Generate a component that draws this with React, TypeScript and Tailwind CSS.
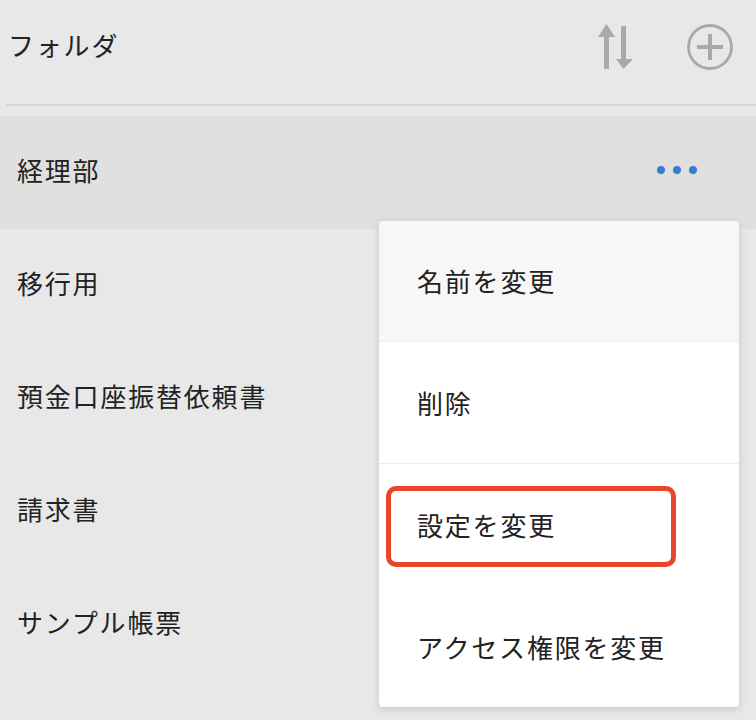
import React from 'react';

const folders = ['経理部', '移行用', '預金口座振替依頼書', '請求書', 'サンプル帳票'];

const menuItems = ['名前を変更', '削除', '設定を変更', 'アクセス権限を変更'];

const SortIcon = () => (
  <svg width="36" height="48" viewBox="0 0 36 48" className="block">
    {/* up arrow */}
    <polygon points="10.5,1 19,14 2,14" fill="#a9a9a9" />
    <rect x="8" y="13" width="5" height="33" fill="#a9a9a9" />
    {/* down arrow */}
    <rect x="25" y="3" width="5" height="34" fill="#a9a9a9" />
    <polygon points="20,36 37,36 27.5,46" fill="#a9a9a9" />
  </svg>
);

const PlusCircleIcon = () => (
  <svg width="48" height="48" viewBox="0 0 48 48" className="block">
    <circle cx="24" cy="24" r="21.5" fill="none" stroke="#a9a9a9" strokeWidth="2.8" />
    <rect x="11" y="22" width="26" height="4" fill="#a9a9a9" />
    <rect x="22" y="11" width="4" height="26" fill="#a9a9a9" />
  </svg>
);

export default function App() {
  return (
    <div
      className="relative w-[756px] h-[720px] overflow-hidden bg-[#e8e8e8] text-[#222222]"
      style={{ fontFamily: '"Noto Sans CJK JP", "Noto Sans", sans-serif' }}
    >
      {/* header */}
      <div className="flex items-center justify-between h-[104px] pl-[8px] pr-[22px]">
        <h1 className="text-[26px] tracking-[1.8px] leading-none -mt-[14px]">フォルダ</h1>
        <div className="flex items-center gap-[54px] -mt-[10px]">
          <SortIcon />
          <PlusCircleIcon />
        </div>
      </div>
      <div className="ml-[6px] h-[2px] bg-[#d6d6d6]" />

      {/* folder list */}
      <div className="mt-[10px]">
        {folders.map((name, i) => (
          <div
            key={name}
            className={`flex items-center justify-between h-[113px] pl-[17px] pr-[59px] ${
              i === 0 ? 'bg-[#e0e0e0]' : ''
            }`}
          >
            <span className="text-[26px] tracking-[1.8px] leading-none -mt-[5px]">{name}</span>
            {i === 0 && (
              <div className="flex items-center gap-[8px] -mt-[6px]">
                <span className="w-[8px] h-[8px] rounded-full bg-[#3a7bd5]" />
                <span className="w-[8px] h-[8px] rounded-full bg-[#3a7bd5]" />
                <span className="w-[8px] h-[8px] rounded-full bg-[#3a7bd5]" />
              </div>
            )}
          </div>
        ))}
      </div>

      {/* context menu */}
      <div className="absolute left-[379px] top-[221px] w-[360px] bg-white rounded-[4px] shadow-[0_2px_8px_rgba(0,0,0,0.15)] overflow-hidden">
        {menuItems.map((label, i) => (
          <div
            key={label}
            className={`relative flex items-center pl-[38px] ${
              i === 0 ? 'h-[121px] bg-[#f7f7f7] border-b border-[#ececec]' : ''
            } ${i === 1 ? 'h-[122px] border-b border-[#ececec]' : ''} ${
              i === 2 ? 'h-[122px]' : ''
            } ${i === 3 ? 'h-[121px]' : ''}`}
          >
            <span className="text-[26px] tracking-[1.8px] leading-none">{label}</span>
            {i === 2 && (
              <div className="absolute left-[7px] top-[22px] w-[290px] h-[81px] border-[5px] border-[#e8452c] rounded-[10px]" />
            )}
          </div>
        ))}
      </div>
    </div>
  );
}
